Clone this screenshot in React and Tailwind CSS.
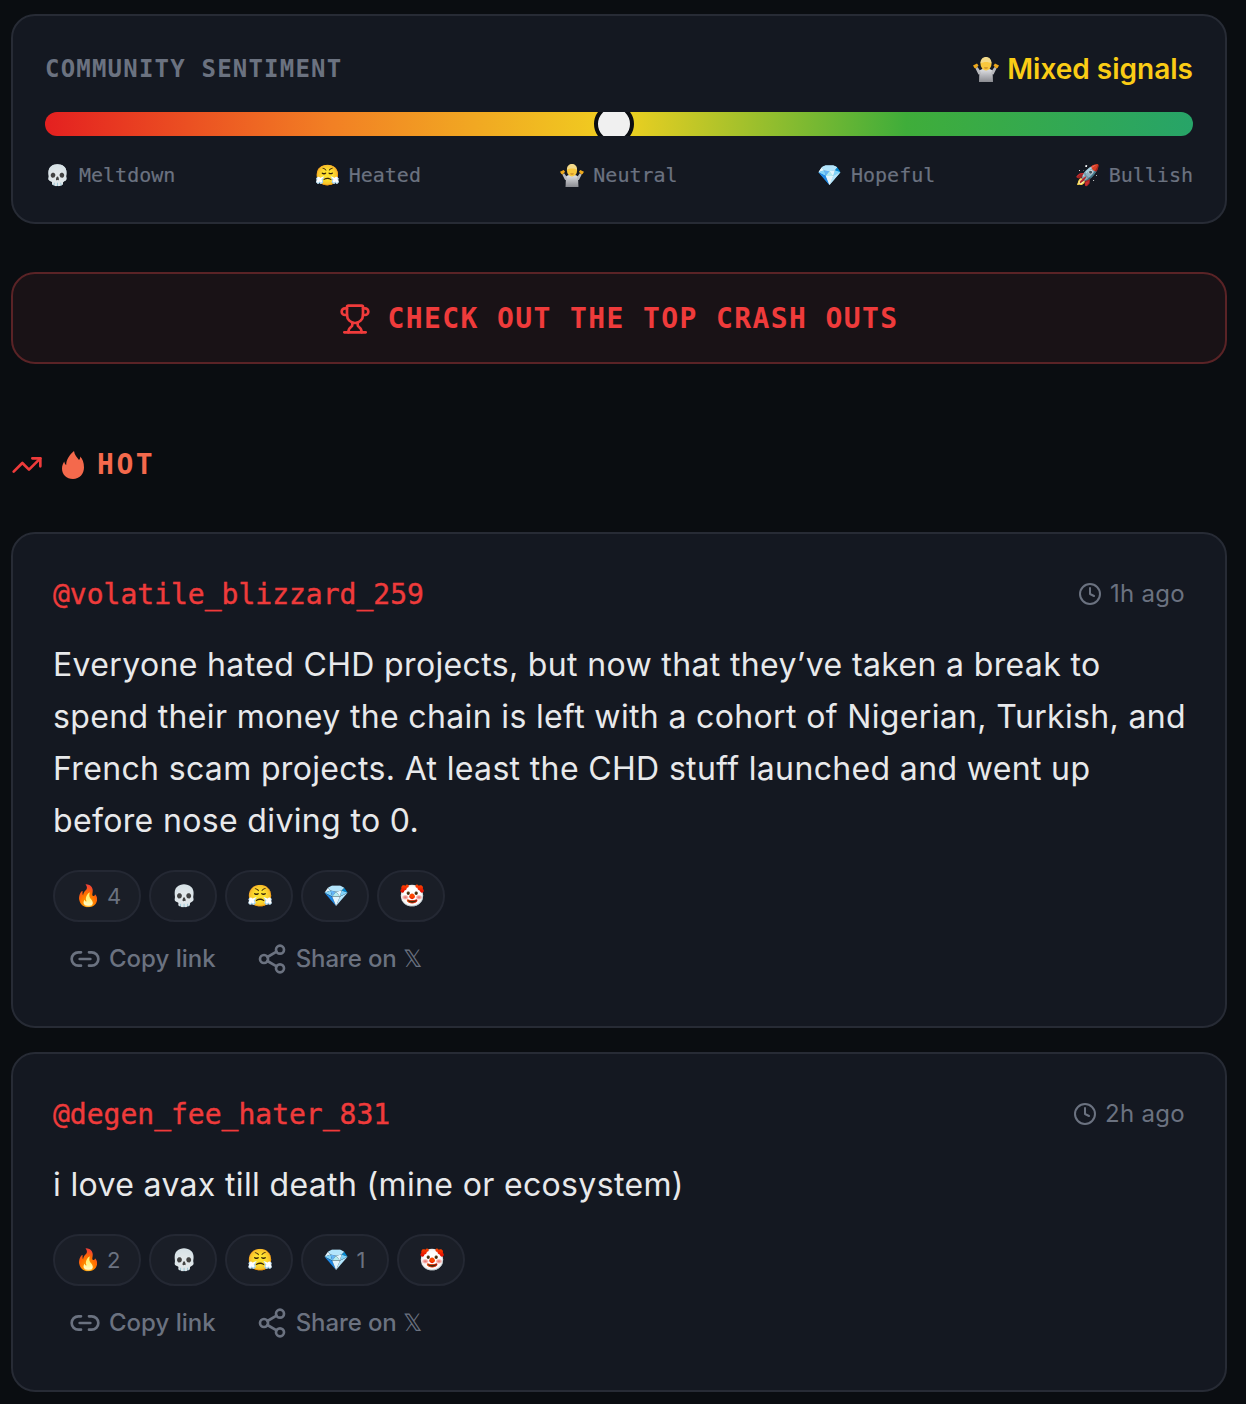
import { TrendingUp, Trophy, Clock, Link2, Share2 } from "lucide-react";

const SANS = "font-['Inter','Noto_Sans',sans-serif]";
const MONO = "font-['DejaVu_Sans_Mono','Liberation_Mono',monospace]";

// shrug emoji drawn by hand, the font's version has a teal shirt
function Shrug({ size }) {
  return (
    <svg width={size} height={size} viewBox="0 0 26 26" className="shrink-0">
      <defs>
        <linearGradient id="shirt" x1="0" y1="0" x2="0" y2="1">
          <stop offset="0" stopColor="#e4e5e8" />
          <stop offset="1" stopColor="#8a8b91" />
        </linearGradient>
      </defs>
      <path d="M6.500 14.500c2-1.500 4.500-2 6.500-2s4.500.5 6.500 2L20 26H6z" fill="url(#shirt)" />
      <path d="M7 14.500 4.500 11 2.500 12.500 5.500 18.500 8 18zM19 14.500 21.500 11 23.500 12.500 20.500 18.500 18 18z" fill="#b9babe" />
      <path d="M0 9.500 4 7.500 5.500 9.500 3 12.500 1.500 12zM26 9.500 22 7.500 20.500 9.500 23 12.500 24.500 12z" fill="#eda81c" />
      <ellipse cx="13" cy="8" rx="5.500" ry="6.500" fill="#f8c73e" />
      <path d="M7.500 7.500C7.500 3 10 1 13 1s5.500 2 5.500 6.500C15.500 5.500 10.500 5.500 7.500 7.500z" fill="#f2d98a" />
      <path d="M11 11.500h4l-.7 1h-2.600z" fill="#b5751e" />
    </svg>
  );
}

const LEGEND = [
  ["💀", "Meltdown"],
  ["😤", "Heated"],
  [null, "Neutral"],
  ["💎", "Hopeful"],
  ["🚀", "Bullish"],
];

const POSTS = [
  {
    user: "@volatile_blizzard_259",
    time: "1h ago",
    lines: [
      "Everyone hated CHD projects, but now that they’ve taken a break to",
      "spend their money the chain is left with a cohort of Nigerian, Turkish, and",
      "French scam projects. At least the CHD stuff launched and went up",
      "before nose diving to 0.",
    ],
    reactions: [["🔥", 4], ["💀"], ["😤"], ["💎"], ["🤡"]],
  },
  {
    user: "@degen_fee_hater_831",
    time: "2h ago",
    lines: ["i love avax till death (mine or ecosystem)"],
    reactions: [["🔥", 2], ["💀"], ["😤"], ["💎", 1], ["🤡"]],
  },
];

function Reaction({ emoji, count }) {
  return (
    <button className="h-[52px] flex items-center gap-2 px-[20px] rounded-full border-2 border-[#242833] bg-[#1a1e27]">
      <span className="w-6 pb-[2px] text-left text-[21px] leading-none">{emoji}</span>
      {count && <span className="w-3 text-center text-[22px] text-[#6b7280]">{count}</span>}
    </button>
  );
}

function PostCard({ post }) {
  return (
    <div className="mt-6 rounded-3xl border-2 border-[#272b35] bg-[#141821] p-10">
      {/* Header */}
      <div className="flex items-center justify-between h-10">
        <span className={`${MONO} pt-[2px] text-[28px] text-[#ef3b3b] [-webkit-text-stroke:0.4px]`}>{post.user}</span>
        <span className="flex items-center gap-2 text-[24px] tracking-[0.3px] text-[#6b7280]">
          <Clock size={24} />
          {post.time}
        </span>
      </div>

      {/* Body */}
      <div className="mt-6 pt-px -mb-px text-[32px] leading-[52px] tracking-[0.35px] text-[#e8e9eb]">
        {post.lines.map((line) => (
          <p key={line} className="whitespace-nowrap">
            {line}
          </p>
        ))}
      </div>

      {/* Reactions */}
      <div className="mt-6 flex gap-2">
        {post.reactions.map(([emoji, count]) => (
          <Reaction key={emoji} emoji={emoji} count={count} />
        ))}
      </div>

      {/* Actions */}
      <div className="mt-3 mb-1 flex gap-2 h-12 pt-[2px] text-[24px] font-medium text-[#6b7280]">
        <button className="flex items-center gap-2 px-4">
          <Link2 size={32} />
          Copy link
        </button>
        <button className="flex items-center gap-2 px-4">
          <Share2 size={32} />
          <span className="tracking-[-0.1px]">Share on 𝕏</span>
        </button>
      </div>
    </div>
  );
}

export default function App() {
  return (
    <div className={`${SANS} min-h-[1404px] bg-[#0a0d11] pt-[14px] pl-[11px]`}>
      <div className="w-[1216px]">
        {/* Sentiment */}
        <div className="rounded-3xl border-2 border-[#272b35] bg-[#141821] p-8">
          <div className="flex items-center justify-between h-10 pt-[2px]">
            <span className={`${MONO} text-[24px] font-bold tracking-[0.05em] text-[#6b7280]`}>
              COMMUNITY SENTIMENT
            </span>
            <span className="flex items-center gap-2 text-[28px] font-semibold text-[#facc15]">
              <Shrug size={26} />
              Mixed signals
            </span>
          </div>

          <div className="relative mt-6 h-6 overflow-hidden rounded-full bg-[linear-gradient(to_right,#e42020,#f28024_25%,#f0d020_50%,#3fad3a_75%,#27a468)]">
            <div className="absolute left-[549px] top-[-8px] h-10 w-10 rounded-full border-4 border-[#0a0d11] bg-[#f0f0f0]" />
          </div>

          <div className={`${MONO} mt-6 flex justify-between text-[20px] leading-[30px] text-[#6b7280] [-webkit-text-stroke:0.2px]`}>
            {LEGEND.map(([emoji, label]) => (
              <span key={label} className="flex items-center gap-[9px]">
                {emoji ? <span className="text-[20px]">{emoji}</span> : <Shrug size={24} />}
                {label}
              </span>
            ))}
          </div>
        </div>

        {/* Banner */}
        <button className={`${MONO} mt-12 flex h-[92px] w-full items-center justify-center gap-4 rounded-3xl border-2 border-[#5a2326] bg-[#191216] pt-[2px] text-[28px] font-bold tracking-[0.05em] text-[#ef3b3b]`}>
          <Trophy size={32} />
          CHECK OUT THE TOP CRASH OUTS
        </button>

        {/* Section title */}
        <div className="mt-[79px] mb-[47px] flex h-[42px] items-center gap-[19px] pt-[2px]">
          <TrendingUp size={32} className="text-[#ef3b3b]" />
          <span className={`${MONO} flex items-center gap-[13px] text-[28px] font-bold tracking-[0.09em] text-[#f4694c]`}>
            <svg width="22" height="28" viewBox="0 0 22 28" fill="currentColor">
              <path d="M12 0C12.500 4 15 6.500 17 9C18 8 18.300 7 18.200 5.500C20.500 8 22 11.500 22 16.500C22 23 17.500 28 11 28C4.500 28 0 23.500 0 17.500C0 14.500 1 12.500 2.300 10.500C2.500 12.500 3.200 13.500 4.200 14C4.200 8.500 7.500 4 12 0Z" />
            </svg>
            HOT
          </span>
        </div>

        {POSTS.map((post) => (
          <PostCard key={post.user} post={post} />
        ))}
      </div>
    </div>
  );
}
